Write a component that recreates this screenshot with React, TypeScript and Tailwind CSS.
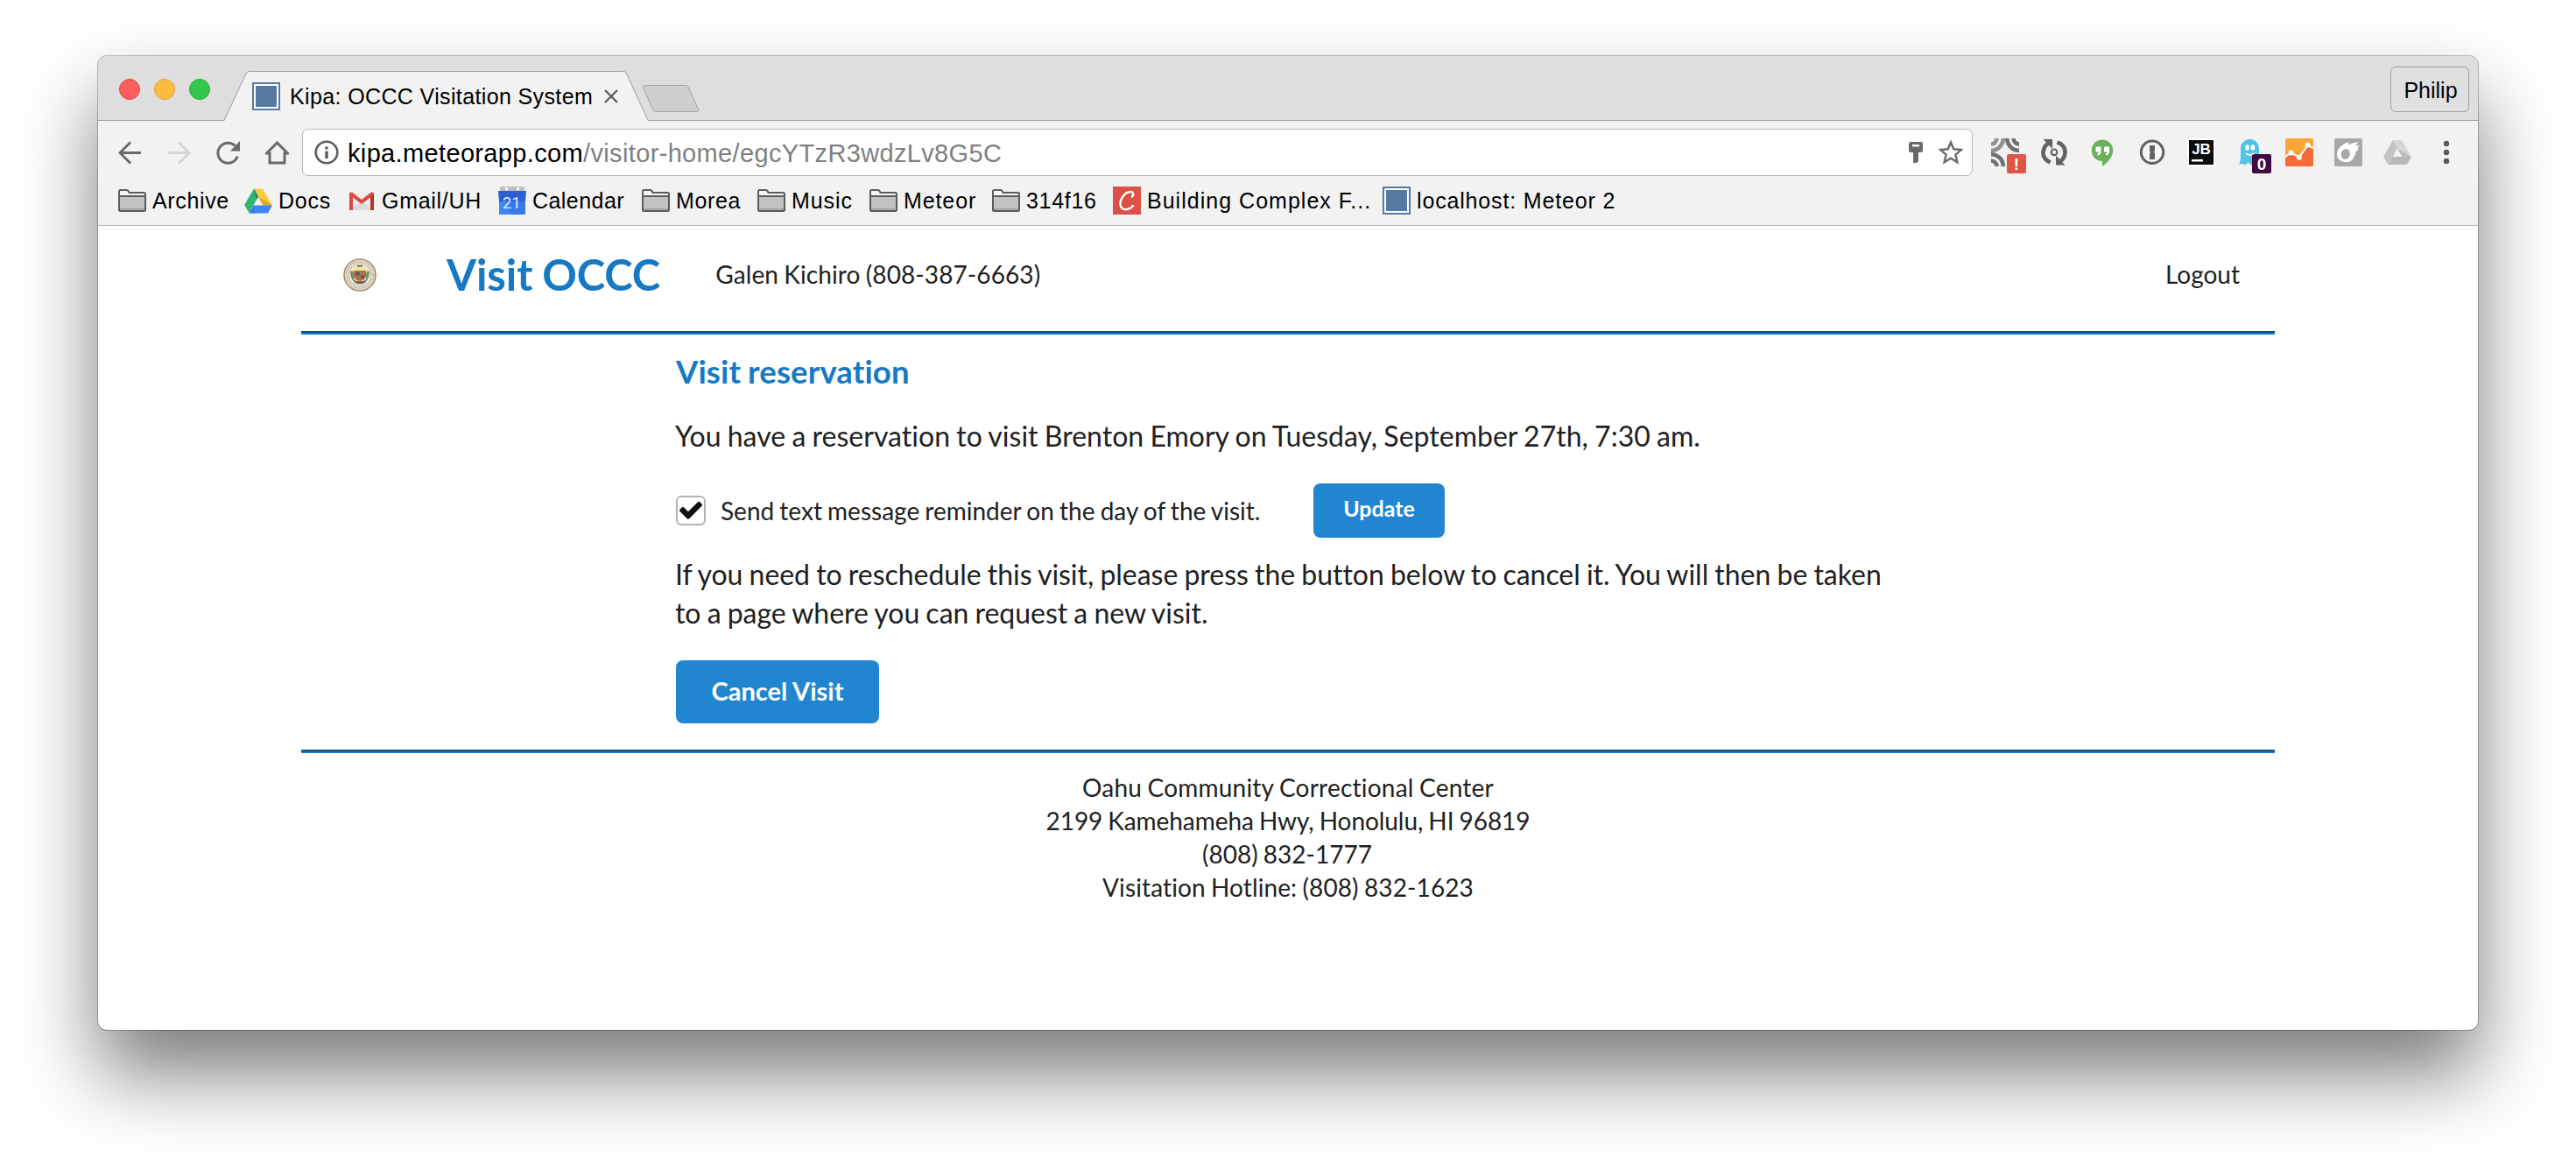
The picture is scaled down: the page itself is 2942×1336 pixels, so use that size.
import React, { type ReactNode } from "react";

function FolderIcon() {
  return (
    <svg viewBox="0 0 32 32" className="size-8 shrink-0">
      <path d="M1 27V5.500Q1 4 2.500 4H9.500Q11 4 11.500 5L12.500 7H29.500Q31 7 31 8.500V26.500Q31 28 29.500 28H2.500Q1 28 1 26.500Z" fill="#c2c2c2" />
      <path d="M1.500 11V4.500H10.500L12 7.500H30.500V11Z" fill="#f6f6f6" />
      <path d="M2 24.500H30V28H2Z" fill="#a9a9a9" />
      <path d="M1 26.500V5.500Q1 4 2.500 4H9.500Q11 4 11.500 5L12.500 7H29.500Q31 7 31 8.500V26.500Q31 28 29.500 28H2.500Q1 28 1 26.500ZM1 11H31" fill="none" stroke="#5c5c5c" strokeWidth="2" />
    </svg>
  );
}

function DriveIcon() {
  return (
    <svg viewBox="0 0 32 32" className="size-8 shrink-0">
      <path d="M11 2.500H21L32 21.500H21.500Z" fill="#ffcb3d" />
      <path d="M16 11.500L21.500 21.500L32 21.500Z" fill="#d9a929" />
      <path d="M11 2.500L16 11.500L5.500 30L0 21Z" fill="#30b575" />
      <path d="M10.500 21.500H32L27 30.500H5.500Z" fill="#4086f4" />
      <path d="M11 2.500L16 11.500L14 15Z" fill="#1e8a55" />
      <path d="M5.500 30.500L10.500 21.500L13 30.500Z" fill="#2f6fe0" opacity=".6" />
    </svg>
  );
}

function GmailIcon() {
  return (
    <svg viewBox="0 0 32 32" className="size-8 shrink-0">
      <path d="M3 6.500H29V27H3Z" fill="#ededed" />
      <path d="M3 27L16 16L29 27Z" fill="#dcdcdc" />
      <path d="M2 8Q2 6.500 3.500 6.500H5L16 15L27 6.500H28.500Q30 6.500 30 8V27H26V12.500L16 20L6 12.500V27H2Z" fill="#db4a3e" />
      <path d="M26 12.500L30 8V27H26Z" fill="#b93123" />
    </svg>
  );
}

function CalendarIcon() {
  return (
    <svg viewBox="0 0 32 32" className="size-8 shrink-0">
      <path d="M2 1.500Q2 0 3.500 0H28.500Q30 0 30 1.500V6H2Z" fill="#bdbdbd" />
      <circle cx="9.500" cy="2.800" r="1.700" fill="#fff" />
      <circle cx="22.500" cy="2.800" r="1.700" fill="#fff" />
      <path d="M0 5H32L31 17V30.500Q31 32 29.500 32H2.500Q1 32 1 30.500V17Z" fill="#2b5fd3" />
      <path d="M1 17H31V30.500Q31 32 29.500 32H2.500Q1 32 1 30.500Z" fill="#4086f4" />
      <path d="M8 24L16 32H28L31 29V17L26 12Z" fill="#2f6bdc" opacity=".5" />
      <text x="15.500" y="24.500" textAnchor="middle" fontSize="18" fontFamily="Roboto, sans-serif" fill="#e8effd">21</text>
    </svg>
  );
}

function SquareIcon() {
  return (
    <svg viewBox="0 0 32 32" className="size-8 shrink-0">
      <path d="M0 0H32V32H0Z" fill="#56799f" />
      <path d="M2 2H30V30H2Z" fill="#fff" />
      <path d="M4 4H28V28H4Z" fill="#56799f" />
    </svg>
  );
}

function CIcon() {
  return (
    <svg viewBox="0 0 32 32" className="size-8 shrink-0">
      <path d="M0 0H32V32H0Z" fill="#dc5147" />
      <path d="M22 11.500C24.500 8.500 23 5.500 19.500 6C13 7 8 14.500 8.500 20.500C9 27 17 28.500 23 22" fill="none" stroke="#fff" strokeWidth="2.400" strokeLinecap="round" />
    </svg>
  );
}

function Bookmark({ icon, label, className }: { icon: ReactNode; label: string; className: string }) {
  return (
    <div className={`flex shrink-0 items-center gap-[7px] ${className}`}>
      {icon}
      <span className="whitespace-nowrap text-[25px] leading-8">{label}</span>
    </div>
  );
}

function Badge({ color, children }: { color: string; children: ReactNode }) {
  return (
    <span className={`absolute left-[18px] top-[18px] flex size-[22px] items-center justify-center rounded-[2px] text-[19px] font-bold leading-none text-white ${color}`}>
      {children}
    </span>
  );
}

function Extensions() {
  return (
    <div className="flex items-center gap-6">
      <div className="relative size-8">
        <svg viewBox="0 0 32 32" className="size-8">
          <g fill="none" strokeWidth="4.600">
            <path d="M0 6.500A6.500 6.500 0 0 0 6.500 0M0 13.800A13.800 13.800 0 0 0 13.800 0" stroke="#8f8f8f" />
            <path d="M32 6.500A6.500 6.500 0 0 1 25.500 0M32 13.800A13.800 13.800 0 0 1 18.200 0" stroke="#707070" />
            <path d="M0 25.500A6.500 6.500 0 0 1 6.500 32M0 18.200A13.800 13.800 0 0 1 13.800 32" stroke="#707070" />
          </g>
        </svg>
        <Badge color="bg-[#e05544]">!</Badge>
      </div>
      <svg viewBox="0 0 32 32" className="size-8">
        <path d="M13 4.500A11.800 11.800 0 0 0 9 26L11.500 27.500" fill="none" stroke="#616161" strokeWidth="4.600" />
        <path d="M19 27.500A11.800 11.800 0 0 0 23 6L19.500 4.500" fill="none" stroke="#616161" strokeWidth="4.600" />
        <path d="M3.500 1H14V12Z" fill="#616161" />
        <path d="M28.500 30.500H18V19.500Z" fill="#616161" />
        <circle cx="16" cy="15.800" r="3.300" fill="none" stroke="#616161" strokeWidth="2.200" />
      </svg>
      <svg viewBox="0 0 32 32" className="size-8">
        <path d="M15 1.500A12.200 12.200 0 0 1 27.200 13.700C27.200 20 22 27 15 32V26A12.200 12.200 0 0 1 15 1.500Z" fill="#67b25a" />
        <path d="M7.500 9.500H13.500V15.500Q13.500 18.500 9.500 19.500V17.500Q11 17 11 15.500H7.500ZM17 9.500H23V15.500Q23 18.500 19 19.500V17.500Q20.500 17 20.500 15.500H17Z" fill="#fff" />
      </svg>
      <svg viewBox="0 0 32 32" className="size-8">
        <circle cx="16" cy="15.800" r="12.700" fill="#f6f6f6" stroke="#616161" strokeWidth="3" />
        <path d="M13 8H19V14L18 15.500L19 17V24H13V17.500L14 16L13 14.500Z" fill="#616161" />
      </svg>
      <svg viewBox="0 0 32 32" className="size-8">
        <path d="M0 0H32V32H0Z" fill="#fff" opacity=".8" />
        <path d="M2 2H30V30H2Z" fill="#0c0c0c" />
        <text x="16" y="17.500" textAnchor="middle" fontSize="17" fontWeight="700" fontFamily="Liberation Sans, sans-serif" fill="#fff">JB</text>
        <path d="M5 24H18V26.500H5Z" fill="#fff" />
      </svg>
      <div className="relative size-8">
        <svg viewBox="0 0 32 32" className="size-8">
          <path d="M15.500 1C22 1 26 6 26 12V29L22 27L18 31L14 27.500L10 30.500L7.500 29L3 29.500C5.500 26 5 18 5 12C5 6 9 1 15.500 1Z" fill="#4fc3e8" />
          <ellipse cx="12.500" cy="10.500" rx="2.300" ry="3.200" fill="#fff" />
          <ellipse cx="19" cy="10.500" rx="2.300" ry="3.200" fill="#fff" />
          <path d="M11 17Q16 21 21 17" fill="none" stroke="#fff" strokeWidth="2" />
        </svg>
        <Badge color="bg-[#3f0a3f]">0</Badge>
      </div>
      <svg viewBox="0 0 32 32" className="size-8">
        <rect width="32" height="32" rx="2" fill="#faa634" />
        <path d="M0 20L6.500 16.500L16 21.500L25.500 8L32 11V30Q32 32 30 32H2Q0 32 0 30Z" fill="#f46c38" />
        <path d="M0 21L6.500 16.500L16 21.500L25.500 8L32 11" fill="none" stroke="#fff" strokeWidth="2" />
        <circle cx="6.500" cy="16.500" r="3" fill="#fff" />
        <circle cx="16" cy="21.700" r="3" fill="#fff" />
        <circle cx="25.500" cy="7.500" r="3" fill="#fff" />
      </svg>
      <svg viewBox="0 0 32 32" className="size-8">
        <rect width="32" height="32" rx="2" fill="#a8a8a8" />
        <path d="M3 18C3 12 8 7 17 4L15.500 7.500C19 6 23 5 27.500 4L24 8.500L29 7.500C26 10 28 11 26.500 14L23.500 15.500C26 17 23 19 22.500 21C20 27 15 27.500 12 27C7 26.500 3 23 3 18Z" fill="#fff" />
        <ellipse cx="12.800" cy="18" rx="5" ry="6" transform="rotate(20 12.800 18)" fill="#a8a8a8" />
      </svg>
      <svg viewBox="0 0 32 32" className="size-8">
        <path d="M11 2H21L32 21H21Z" fill="#d6d6d6" />
        <path d="M11 2L16 11L5.500 30L0 21Z" fill="#c2c2c2" />
        <path d="M10.500 21H32L27 30H5.500Z" fill="#b8b8b8" />
        <path d="M16 11.500L21.500 21H32Z" fill="#bdbdbd" />
        <path d="M16 12L21 21H11Z" fill="#f2f2f2" />
      </svg>
    </div>
  );
}

function TabStrip() {
  return (
    <div className="relative flex h-[74px] items-start border-b border-[#a0a0a0] bg-[#dedede]">
      <div className="ml-6 mt-[26px] flex gap-4">
        <span className="size-6 rounded-full border border-[#e0473f] bg-[#fc605c]" />
        <span className="size-6 rounded-full border border-[#dea035] bg-[#fdbc40]" />
        <span className="size-6 rounded-full border border-[#24a732] bg-[#34c84a]" />
      </div>
      <div className="relative ml-4 mt-[17px] h-[57px] w-[485px]">
        <svg viewBox="0 0 485 57" className="absolute inset-0 h-[57px] w-[485px]">
          <path d="M0 57L25 3Q26.500 .5 29 .5H456Q458.500 .5 459.500 3L483 54Q484 56.500 485 57Z" fill="#f2f2f2" />
          <path d="M0 56.500L25 3Q26.500 .5 29 .5H456Q458.500 .5 459.500 3L483 54Q484 56.500 485 56.500" fill="none" stroke="#9a9a9a" />
        </svg>
        <div className="relative flex items-center pl-[32px] pt-[13px]">
          <SquareIcon />
          <span className="-mt-px ml-[11px] whitespace-nowrap text-[25px] leading-8 tracking-[0.37px]">Kipa: OCCC Visitation System</span>
        </div>
        <svg viewBox="0 0 16 20" className="absolute left-[434px] top-[19px] h-5 w-4">
          <path d="M1 3L15 17M15 3L1 17" stroke="#5a5a5a" strokeWidth="2.200" />
        </svg>
      </div>
      <svg viewBox="0 0 68 34" className="-ml-2 mt-8 h-[34px] w-[68px]">
        <path d="M3 1.500H50Q52.500 1.500 53.500 4L64.500 29Q65.500 31.500 63 31.500H16Q13.500 31.500 12.500 29L1.500 4Q.5 1.500 3 1.500Z" fill="#cfcfcf" stroke="#a3a3a3" />
      </svg>
      <div className="ml-auto mr-[10px] mt-3 flex h-[52px] w-[90px] items-center justify-center rounded-md border border-[#a0a0a0] bg-[#e0e0e0] pl-0.5 pt-0.5">
        <span className="text-[25px] leading-8">Philip</span>
      </div>
    </div>
  );
}

function Toolbar() {
  return (
    <div className="flex h-[72px] items-center pl-[23px]">
      <div className="flex items-center gap-[29px]">
        <svg viewBox="0 0 27 27" className="size-[27px]">
          <path d="M26 13.500H2.500M14 1.500L2 13.500L14 25.500" fill="none" stroke="#6a6a6a" strokeWidth="3" />
        </svg>
        <svg viewBox="0 0 27 27" className="size-[27px]">
          <path d="M1 13.500H24.500M13 1.500L25 13.500L13 25.500" fill="none" stroke="#d6d6d6" strokeWidth="3" />
        </svg>
        <svg viewBox="0 0 27 27" className="size-[27px]">
          <path d="M21.500 5.500A11.500 11.500 0 1 0 24.300 17.500" fill="none" stroke="#6a6a6a" strokeWidth="3" />
          <path d="M27 0V11.500H16Z" fill="#6a6a6a" />
        </svg>
        <svg viewBox="0 0 27 27" className="size-[27px]">
          <path d="M1.500 14L13.500 2L25.500 14H22V25H5V14Z" fill="none" stroke="#6a6a6a" strokeWidth="3" />
        </svg>
      </div>
      <div className="ml-[15px] flex h-[54px] w-[1908px] items-center rounded-[7px] border border-[#b6b6b6] bg-white pl-[13px] pr-[10px]">
        <svg viewBox="0 0 28 28" className="size-7">
          <circle cx="14" cy="14" r="12.300" fill="none" stroke="#5c5c5c" strokeWidth="2.600" />
          <path d="M12.300 7.500H15.700V10.500H12.300ZM12.300 12.500H15.700V21H12.300Z" fill="#5c5c5c" />
        </svg>
        <span className="ml-[10px] mt-0.5 whitespace-nowrap text-[29px] leading-9 tracking-[0.35px]">
          <span className="text-black">kipa.meteorapp.com</span>
          <span className="text-[#808080]">/visitor-home/egcYTzR3wdzLv8G5C</span>
        </span>
        <svg viewBox="0 0 16 26" className="ml-auto h-[26px] w-4">
          <path d="M2 1H14Q16 1 16 3V11Q16 13 14 13H11V23L9 25H5V13H2Q0 13 0 11V3Q0 1 2 1Z" fill="#6a6a6a" />
          <path d="M4 4H12V6.500H4Z" fill="#fff" />
        </svg>
        <svg viewBox="0 0 28 28" className="ml-[18px] size-7">
          <path d="M14 2.500L17.300 10.300L26 11L19.400 16.700L21.400 25.300L14 20.700L6.600 25.300L8.600 16.700L2 11L10.700 10.300Z" fill="none" stroke="#6a6a6a" strokeWidth="2.400" />
        </svg>
      </div>
      <div className="ml-[21px]">
        <Extensions />
      </div>
      <svg viewBox="0 0 8 28" className="ml-9 h-7 w-2">
        <circle cx="4" cy="4" r="3.200" fill="#5a5a5a" />
        <circle cx="4" cy="14" r="3.200" fill="#5a5a5a" />
        <circle cx="4" cy="24" r="3.200" fill="#5a5a5a" />
      </svg>
    </div>
  );
}

function BookmarksBar() {
  return (
    <div className="flex h-12 items-start border-b border-[#b6b6b6] pl-[23px] pt-[3px]">
      <Bookmark className="w-[144px] tracking-[0.65px]" icon={<FolderIcon />} label="Archive" />
      <Bookmark className="w-[118px] tracking-[0.8px]" icon={<DriveIcon />} label="Docs" />
      <Bookmark className="w-[172px] tracking-[0.7px]" icon={<GmailIcon />} label="Gmail/UH" />
      <Bookmark className="w-[164px] tracking-[0.45px]" icon={<CalendarIcon />} label="Calendar" />
      <Bookmark className="w-[132px] tracking-[0.65px]" icon={<FolderIcon />} label="Morea" />
      <Bookmark className="w-[128px] tracking-[0.9px]" icon={<FolderIcon />} label="Music" />
      <Bookmark className="w-[140px] tracking-[0.9px]" icon={<FolderIcon />} label="Meteor" />
      <Bookmark className="w-[138px] tracking-[0.7px]" icon={<FolderIcon />} label="314f16" />
      <Bookmark className="w-[308px] tracking-[1.02px]" icon={<CIcon />} label="Building Complex F..." />
      <Bookmark className="w-[280px] tracking-[0.84px]" icon={<SquareIcon />} label="localhost: Meteor 2" />
    </div>
  );
}

function Seal() {
  return (
    <svg viewBox="0 0 38 38" className="size-[38px]">
      <circle cx="19" cy="19" r="18" fill="#f3eee4" stroke="#a48a66" strokeWidth="1.600" />
      <circle cx="19" cy="19" r="15.300" fill="none" stroke="#b9a88c" strokeWidth="2.600" strokeDasharray="1.300 1.100" />
      <circle cx="19" cy="19" r="12.800" fill="#f5f1e8" stroke="#a89880" strokeWidth=".8" />
      <path d="M9 15A11 11 0 0 1 29 15Z" fill="#ece6a2" />
      <path d="M8 15Q11 13 12 17V26Q8 23 8 15Z" fill="#6f8f5c" />
      <path d="M30 15Q27 13 26 17V26Q30 23 30 15Z" fill="#7d9464" />
      <path d="M12 14H26V20Q26 25 19 26Q12 25 12 20Z" fill="#a9743f" />
      <path d="M14.500 15.500H18.500V19.500H14.500ZM20 19.500H24V22.500H20Z" fill="#5c4b86" />
      <path d="M10 23Q19 30 28 23L25 28Q19 31 13 28Z" fill="#6b7d5a" />
      <path d="M15.500 25.500Q19 28 22.500 25.500L21 28H17Z" fill="#b2232a" />
      <path d="M16 8H22V9.500H16Z" fill="#55534a" />
    </svg>
  );
}

function Rule({ className }: { className: string }) {
  return <div className={`h-1 border-t-2 border-[#0b4c7c] bg-[#1a79c6] ${className}`} />;
}

function Page() {
  return (
    <main className="mx-auto w-[2254px] font-[Lato,sans-serif] text-[28px] text-[#212121] [font-variant-ligatures:none] [word-spacing:-1px]">
      <header className="flex h-[110px] items-center">
        <div className="ml-12 mt-0.5">
          <Seal />
        </div>
        <h1 className="ml-20 whitespace-nowrap text-[49px] font-bold leading-none tracking-[-0.07px] text-[#1779c4]">Visit OCCC</h1>
        <span className="ml-[63px] whitespace-nowrap tracking-[0.1px]">Galen Kichiro (808-387-6663)</span>
        <span className="ml-auto mr-10">Logout</span>
      </header>
      <Rule className="mt-2.5" />
      <section className="ml-[428px] w-[1400px]">
        <h2 className="mt-[18px] text-[36.500px] font-bold leading-[48px] tracking-[0.12px] text-[#1779c4]">Visit reservation</h2>
        <p className="-ml-px mt-7 whitespace-nowrap text-[32px] leading-[44px] tracking-[0.02px]">You have a reservation to visit Brenton Emory on Tuesday, September 27th, 7:30 am.</p>
        <div className="mt-8 flex h-[62px] items-center">
          <span className="flex size-[34px] items-center justify-center rounded-[6px] border-2 border-[#b4b4b4] bg-white">
            <svg viewBox="121 302 1550 1220" className="mb-0.5 h-[21px] w-[26px] shrink-0">
              <path fill="#111" d="M1671 566q0 40-28 68l-724 724-136 136q-28 28-68 28t-68-28l-136-136-362-362q-28-28-28-68t28-68l136-136q28-28 68-28t68 28l294 295 656-657q28-28 68-28t68 28l136 136q28 28 28 68z" />
            </svg>
          </span>
          <span className="ml-[17px] whitespace-nowrap">Send text message reminder on the day of the visit.</span>
          <button className="ml-auto mr-[522px] flex h-[62px] w-[150px] items-center justify-center rounded-lg bg-[#2185d0] pb-1 text-[25px] font-bold text-white">
            Update
          </button>
        </div>
        <p className="-ml-px mt-5 whitespace-nowrap text-[32px] leading-[44px] tracking-[-0.025px]">
          If you need to reschedule this visit, please press the button below to cancel it. You will then be taken
          <br />
          to a page where you can request a new visit.
        </p>
        <button className="mt-8 flex h-[72px] w-[232px] items-center justify-center rounded-lg bg-[#2185d0] pb-0.5 text-[29px] font-bold text-white">
          Cancel Visit
        </button>
      </section>
      <Rule className="mt-[30px]" />
      <footer className="mt-5 text-center leading-[38px]">
        <div className="tracking-[0.22px]">Oahu Community Correctional Center</div>
        <div className="tracking-[-0.06px]">2199 Kamehameha Hwy, Honolulu, HI 96819</div>
        <div className="pr-0.5">(808) 832-1777</div>
        <div className="tracking-[0.11px]">Visitation Hotline: (808) 832-1623</div>
      </footer>
    </main>
  );
}

export default function App() {
  return (
    <div className="h-[1336px] w-[2942px] overflow-hidden bg-white pl-28 pt-16">
      <div className="h-[1112px] w-[2718px] overflow-hidden rounded-[10px] bg-white font-['Liberation_Sans',sans-serif] text-black shadow-[0_0_0_1px_rgba(0,0,0,0.25),0_50px_90px_rgba(0,0,0,0.52)]">
        <TabStrip />
        <div className="bg-[#f2f2f2]">
          <Toolbar />
          <BookmarksBar />
        </div>
        <Page />
      </div>
    </div>
  );
}
